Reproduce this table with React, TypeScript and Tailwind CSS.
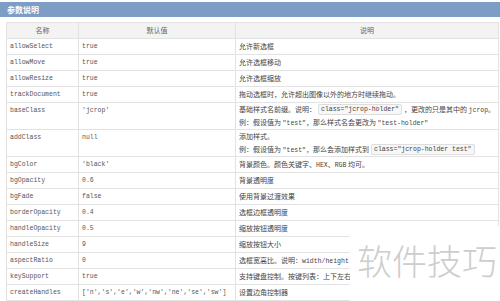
import React from 'react';

type Row = {
    name: string;
    value: string;
    desc: React.ReactNode;
    tall?: boolean;
};

const Code: React.FC<{ children: React.ReactNode }> = ({ children }) => (
    <span className="mx-[2px] rounded-[2px] border border-[#dedede] bg-[#f7f7f7] px-[2px] py-px align-middle font-['Liberation_Mono',monospace] text-[6.5px] leading-none text-[#444]">
        {children}
    </span>
);

const Mono: React.FC<{ children: React.ReactNode }> = ({ children }) => (
    <span className="font-['Liberation_Mono',monospace] text-[6.5px] leading-none">{children}</span>
);

const Line: React.FC<{ children: React.ReactNode }> = ({ children }) => (
    <div className="h-[13px] overflow-visible leading-[13px]">{children}</div>
);

const rows: Row[] = [
    { name: 'allowSelect', value: 'true', desc: '允许新选框' },
    { name: 'allowMove', value: 'true', desc: '允许选框移动' },
    { name: 'allowResize', value: 'true', desc: '允许选框缩放' },
    { name: 'trackDocument', value: 'true', desc: '拖动选框时，允许超出图像以外的地方时继续拖动。' },
    {
        name: 'baseClass',
        value: "'jcrop'",
        tall: true,
        desc: (
            <>
                <Line>基础样式名前缀。说明：<Code>class="jcrop-holder"</Code>，更改的只是其中的 <Mono>jcrop</Mono>。</Line>
                <Line>例：假设值为 <Mono>"test"</Mono>，那么样式名会更改为 <Mono>"test-holder"</Mono></Line>
            </>
        ),
    },
    {
        name: 'addClass',
        value: 'null',
        tall: true,
        desc: (
            <>
                <Line>添加样式。</Line>
                <Line>例：假设值为 <Mono>"test"</Mono>，那么会添加样式到<Code>class="jcrop-holder test"</Code></Line>
            </>
        ),
    },
    { name: 'bgColor', value: "'black'", desc: <>背景颜色。颜色关键字、<Mono>HEX</Mono>、<Mono>RGB</Mono> 均可。</> },
    { name: 'bgOpacity', value: '0.6', desc: '背景透明度' },
    { name: 'bgFade', value: 'false', desc: '使用背景过渡效果' },
    { name: 'borderOpacity', value: '0.4', desc: '选框边框透明度' },
    { name: 'handleOpacity', value: '0.5', desc: '缩放按钮透明度' },
    { name: 'handleSize', value: '9', desc: '缩放按钮大小' },
    { name: 'aspectRatio', value: '0', desc: <>选框宽高比。说明：<Mono>width/height</Mono></> },
    { name: 'keySupport', value: 'true', desc: '支持键盘控制。按键列表：上下左右' },
    { name: 'createHandles', value: "['n','s','e','w','nw','ne','se','sw']", desc: '设置边角控制器' },
];

const cell = 'border border-[#e2e2e2] p-0 align-top';

export default function App() {
    return (
        <div className="relative h-[301px] w-[500px] overflow-hidden bg-white font-['Noto_Sans_CJK_SC',sans-serif]">
            <div className="mt-[2px] flex h-[15px] items-center bg-[#7d9dc4] pl-[7px] text-[8px] font-bold text-white">
                参数说明
            </div>

            <table className="ml-[6px] mt-[5px] w-[493px] table-fixed border-collapse text-[7px]">
                <colgroup>
                    <col className="w-[72px]" />
                    <col className="w-[157px]" />
                    <col />
                </colgroup>
                <thead>
                    <tr className="bg-[#f3f3f3] text-[#666]">
                        <th className="border border-[#e2e2e2] p-0 font-normal">
                            <div className="h-[15px] leading-[15px]">名称</div>
                        </th>
                        <th className="border border-[#e2e2e2] p-0 font-normal">
                            <div className="h-[15px] leading-[15px]">默认值</div>
                        </th>
                        <th className="border border-[#e2e2e2] p-0 font-normal">
                            <div className="h-[15px] leading-[15px]">说明</div>
                        </th>
                    </tr>
                </thead>
                <tbody>
                    {rows.map((r) => (
                        <tr key={r.name}>
                            <td className={`${cell} font-['Liberation_Mono',monospace] text-[6.5px] text-[#555]`}>
                                <div className="h-[15px] px-[3px] leading-[15px]">{r.name}</div>
                            </td>
                            <td className={`${cell} font-['Liberation_Mono',monospace] text-[6.5px] text-[#555]`}>
                                <div className="h-[15px] px-[3px] leading-[15px]">{r.value}</div>
                            </td>
                            <td className={`${cell} whitespace-nowrap text-[#444]`}>
                                {r.tall ? (
                                    <div className="h-[26px] px-[3px]">{r.desc}</div>
                                ) : (
                                    <div className="h-[15px] px-[3px] leading-[15px]">{r.desc}</div>
                                )}
                            </td>
                        </tr>
                    ))}
                </tbody>
            </table>

            <div className="absolute bottom-0 left-[350px] right-0 top-[226px] flex items-center justify-center bg-white pb-[8px] pl-[4px]">
                <span className="text-[35px] font-light leading-none text-[#cdcdcd]">软件技巧</span>
            </div>
        </div>
    );
}
